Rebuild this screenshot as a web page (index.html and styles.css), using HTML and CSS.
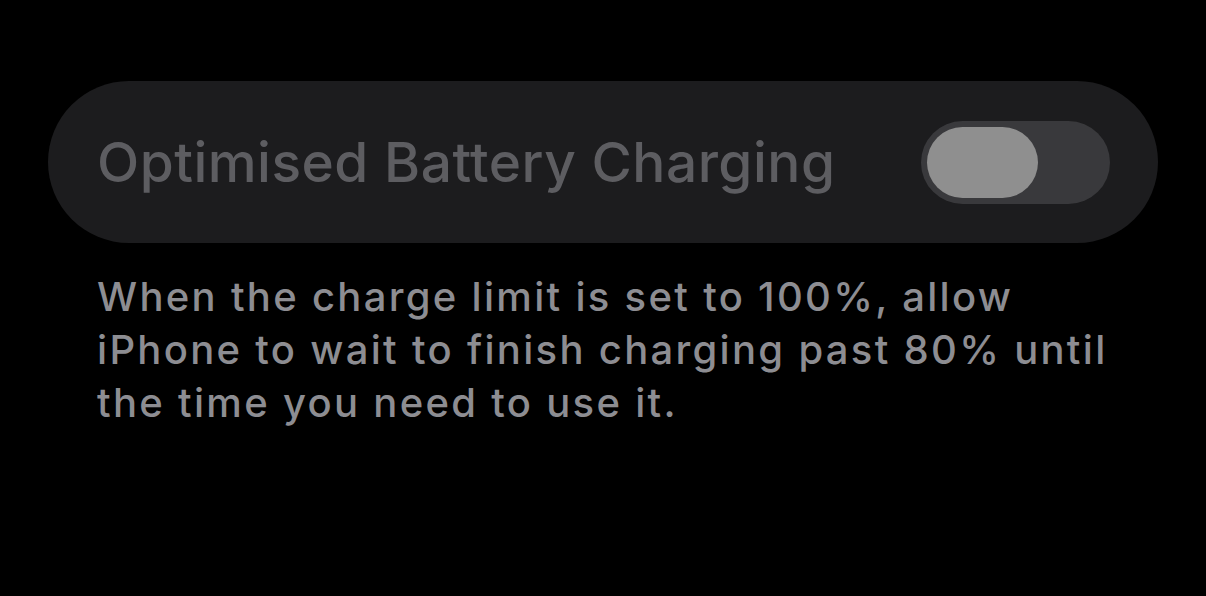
FILE: index.html
```html
<!DOCTYPE html>
<html lang="en">
<head>
    <meta charset="UTF-8">
    <title>Battery Charging</title>
    <link rel="stylesheet" href="styles.css">
</head>
<body>
<div class="screen">
    <div class="setting-card">
        <span class="setting-title">Optimised Battery Charging</span>
        <div class="switch">
            <div class="switch-knob"></div>
        </div>
    </div>
    <p class="setting-footer">
        When the charge limit is set to 100%, allow<br>
        iPhone to wait to finish charging past 80% until<br>
        the time you need to use it.
    </p>
</div>
</body>
</html>
```

FILE: styles.css
```css
body {
    margin: 0;
    background-color: #000;
    font-family: 'Inter', 'Liberation Sans', sans-serif;
}
.screen {
    width: 1206px;
    height: 596px;
    padding: 81px 48px 0 48px;
    box-sizing: border-box;
}
.setting-card {
    display: flex;
    align-items: center;
    justify-content: space-between;
    height: 162px;
    padding: 0 48px 0 49px;
    background-color: #1c1c1e;
    border-radius: 81px;
}
.setting-title {
    font-size: 55px;
    font-weight: 500;
    color: #5d5d61;
    letter-spacing: 0.5px;
}
.switch {
    width: 189px;
    height: 83px;
    padding: 6px;
    box-sizing: border-box;
    background-color: #39393c;
    border-radius: 42px;
}
.switch-knob {
    width: 111px;
    height: 71px;
    background-color: #8f8f8f;
    border-radius: 36px;
}
.setting-footer {
    margin: 27px 0 0 49px;
    font-size: 40px;
    line-height: 53px;
    font-weight: 500;
    color: #8d8d92;
    letter-spacing: 2.3px;
}
```
